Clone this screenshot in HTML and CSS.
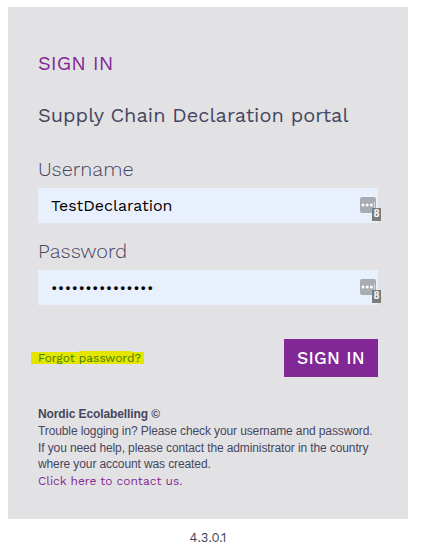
FILE: index.html
```html
<!DOCTYPE html>
<html lang="en">

<head>
    <meta charset="UTF-8">
    <meta name="viewport" content="width=device-width, initial-scale=1.0">
    <title>Supply Chain Declaration portal</title>
    <link rel="stylesheet" href="styles.css">
</head>

<body>
    <form class="login">
        <h1>SIGN IN</h1>
        <h2>Supply Chain Declaration portal</h2>

        <label for="username" class="label-user">Username</label>
        <div class="field">
            <input type="text" id="username" value="TestDeclaration">
            <div class="key">
                <svg width="16" height="16" viewBox="0 0 16 16">
                    <rect width="16" height="16" rx="2" fill="#a8acb3" />
                    <circle cx="3" cy="8" r="1.5" fill="#fff" />
                    <circle cx="7.2" cy="8" r="1.5" fill="#fff" />
                    <circle cx="11.4" cy="8" r="1.5" fill="#fff" />
                    <path d="M14.5 5v6" stroke="#d5d8dd" />
                </svg>
                <span class="count">8</span>
            </div>
        </div>

        <label for="password" class="label-pass">Password</label>
        <div class="field">
            <input type="password" id="password" value="declaration2021">
            <div class="key">
                <svg width="16" height="16" viewBox="0 0 16 16">
                    <rect width="16" height="16" rx="2" fill="#a8acb3" />
                    <circle cx="3" cy="8" r="1.5" fill="#fff" />
                    <circle cx="7.2" cy="8" r="1.5" fill="#fff" />
                    <circle cx="11.4" cy="8" r="1.5" fill="#fff" />
                    <path d="M14.5 5v6" stroke="#d5d8dd" />
                </svg>
                <span class="count">8</span>
            </div>
        </div>

        <div class="actions">
            <a href="#" class="forgot">Forgot password?</a>
            <button type="submit">SIGN IN</button>
        </div>

        <div class="help">
            <b>Nordic Ecolabelling ©</b>
            <p>Trouble logging in? Please check your username and password.<br>
                If you need help, please contact the administrator in the country<br>
                where your account was created.</p>
            <a href="#" class="contact">Click here to contact us.</a>
        </div>
    </form>
    <div class="version">4.3.0.1</div>
</body>

</html>
```

FILE: styles.css
```css
* {
    box-sizing: border-box;
}

body {
    margin: 7px 8px 0;
    font-family: "Work Sans", Inter, sans-serif;
    color: #46465f;
    background-color: #fff;
}

.login {
    width: 400px;
    height: 512px;
    padding: 43px 30px 0;
    background-color: #e2e2e4;
}

h1,
h2 {
    margin: 0;
    font-size: 20px;
    font-weight: 400;
    line-height: 26px;
    white-space: nowrap;
}

h1 {
    color: #822896;
}

h2 {
    margin-top: 26px;
}

label {
    display: block;
    height: 26px;
    font-size: 20px;
    font-weight: 300;
    line-height: 26px;
}

.label-user {
    margin: 28px 0 6px;
}

.label-pass {
    margin: 15px 0 6px;
}

.field {
    position: relative;
    height: 35px;
}

input {
    display: block;
    width: 100%;
    height: 35px;
    padding: 0 40px 0 13px;
    border: none;
    font-family: inherit;
    font-size: 16px;
    color: #000;
    background-color: #e8f0fe;
}

input[type="password"] {
    font-size: 15px;
    letter-spacing: 0.4px;
}

/* password manager marker, hangs over the field corner */
.key {
    position: absolute;
    top: 9px;
    right: 2px;
    width: 16px;
    height: 16px;
}

.key svg {
    display: block;
}

.count {
    position: absolute;
    left: 12px;
    top: 11px;
    width: 9px;
    height: 13px;
    font: bold 10px/12px "Liberation Sans", Arial, sans-serif;
    text-align: center;
    color: #fff;
    background-color: #7c7c7c;
}

.actions {
    display: flex;
    justify-content: space-between;
    align-items: center;
    height: 38px;
    margin-top: 34px;
}

.forgot {
    position: relative;
    height: 12px;
    margin-left: -7px;
    padding: 0 3px 0 7px;
    font-size: 12px;
    line-height: 12px;
    letter-spacing: -0.03px;
    text-decoration: none;
    color: #3e7d00;
    background-color: #e4e500;
}

/* uneven top edge of the marker stroke */
.forgot::before {
    content: "";
    position: absolute;
    left: 48px;
    top: -1px;
    width: 52px;
    height: 1px;
    background-color: #e4e500;
}

button {
    width: 94px;
    height: 38px;
    padding: 0;
    border: none;
    font-family: inherit;
    font-size: 17.5px;
    font-weight: 500;
    letter-spacing: 0.3px;
    color: #fff;
    background-color: #822896;
}

.help {
    margin-top: 29px;
    font: 12px/16.8px "Liberation Sans", Arial, sans-serif;
    letter-spacing: -0.11px;
    white-space: nowrap;
}

.help p {
    margin: 0;
}

.contact {
    font-family: "Work Sans", Inter, sans-serif;
    font-size: 12px;
    letter-spacing: 0;
    text-decoration: none;
    color: #822896;
}

.version {
    width: 400px;
    margin-top: 10px;
    font-size: 13px;
    line-height: 18px;
    text-align: center;
}
```
